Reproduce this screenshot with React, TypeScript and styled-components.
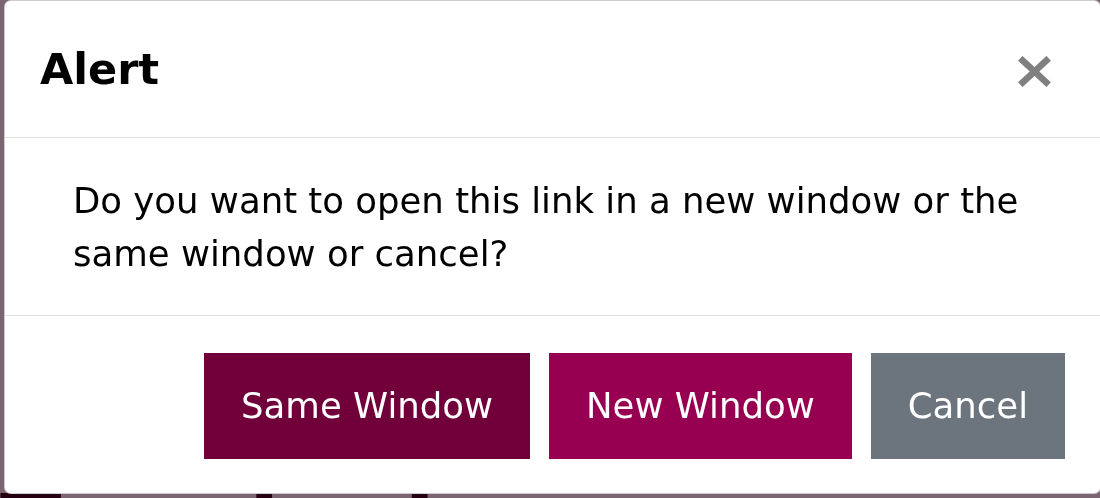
import React from 'react';
import styled, {createGlobalStyle} from 'styled-components';

const GlobalStyle = createGlobalStyle`
  html, body {
    margin: 0;
    padding: 0;
    background: #f4cae0;
    font-family: "DejaVu Sans", Verdana, sans-serif;
  }
`

const Page = styled.div`
  height: 498px;
  overflow: hidden;
  padding: 483px 0 0 0;
  box-sizing: border-box;
`
const PageHeading = styled.h1`
  margin: 0;
  font-size: 90px;
  line-height: 1;
  font-weight: 700;
  color: #4a0020;
  white-space: nowrap;
`
const Backdrop = styled.div`
  position: fixed;
  inset: 0;
  background: rgba(0, 0, 0, 0.5);
`
const Modal = styled.div`
  position: fixed;
  top: 0;
  left: 4px;
  width: 1097px;
  box-sizing: border-box;
  display: flex;
  flex-direction: column;
  background: #fff;
  border: 1px solid rgba(0, 0, 0, 0.2);
  border-radius: 7px;
  color: #000;
`
const Header = styled.div`
  display: flex;
  align-items: flex-start;
  justify-content: space-between;
  padding: 35px;
  border-bottom: 1px solid #dee2e6;
`
const Title = styled.h5`
  margin: 0;
  font-size: 43px;
  line-height: 66px;
  font-weight: 700;
`
const CloseButton = styled.button`
  display: flex;
  padding: 0;
  margin: 20px 14px 0 0;
  border: 0;
  background: transparent;
  cursor: pointer;
`
const Body = styled.div`
  padding: 37px 35px 35px 68px;
  border-bottom: 1px solid #dee2e6;
`
const Message = styled.p`
  margin: 0;
  font-size: 35.5px;
  line-height: 52.5px;
`
const Footer = styled.div`
  display: flex;
  justify-content: flex-end;
  gap: 19px;
  padding: 37px 35px 34px;
`
const Button = styled.button<{ $bg: string }>`
  font-family: "DejaVu Sans", Verdana, sans-serif;
  font-size: 35.5px;
  line-height: 54px;
  padding: 26px 37px;
  border: 0;
  border-radius: 0;
  color: #fff;
  background: ${p => p.$bg};
  cursor: pointer;
`

function CloseIcon() {
    return (
        <svg width="33" height="31" viewBox="0 0 33 31">
            <g stroke="#808080" strokeWidth="6.5" strokeLinecap="butt">
                <line x1="2.3" y1="2.3" x2="30.7" y2="28.7"/>
                <line x1="30.7" y1="2.3" x2="2.3" y2="28.7"/>
            </g>
        </svg>
    )
}

export default function App() {
    return (
        <>
            <GlobalStyle/>
            <Page>
                <PageHeading>Terminals</PageHeading>
            </Page>
            <Backdrop/>
            <Modal>
                <Header>
                    <Title>Alert</Title>
                    <CloseButton aria-label="Close"><CloseIcon/></CloseButton>
                </Header>
                <Body>
                    <Message>Do you want to open this link in a new window or the same window or cancel?</Message>
                </Body>
                <Footer>
                    <Button $bg="#71003a">Same Window</Button>
                    <Button $bg="#970050">New Window</Button>
                    <Button $bg="#6c757d">Cancel</Button>
                </Footer>
            </Modal>
        </>
    )
}
